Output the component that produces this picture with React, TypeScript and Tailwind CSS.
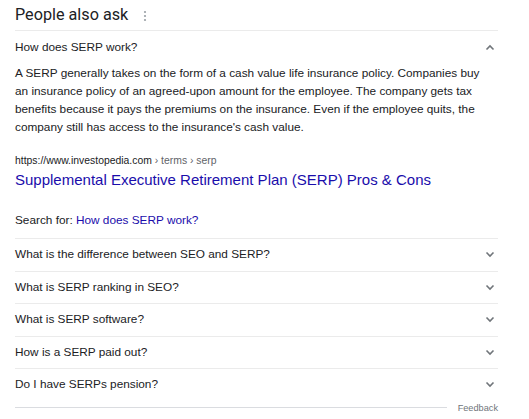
import React from 'react';

const Chevron: React.FC<{ up?: boolean }> = ({ up }) => (
  <svg width="10" height="7" viewBox="0 0 10 7" className="shrink-0">
    <polyline
      points={up ? '1.5,5.5 5,2 8.5,5.5' : '1.5,1.5 5,5 8.5,1.5'}
      fill="none"
      stroke="#70757a"
      strokeWidth="1.6"
    />
  </svg>
);

const questions = [
  'What is the difference between SEO and SERP?',
  'What is SERP ranking in SEO?',
  'What is SERP software?',
  'How is a SERP paid out?',
  'Do I have SERPs pension?',
];

export default function App() {
  return (
    <div className="min-h-screen bg-white text-[#202124] font-['Liberation_Sans',Arial,sans-serif]">
      <div className="pl-[15px] w-[498px]">
        {/* header */}
        <div className="h-[31px] flex items-center border-b border-[#ebebeb]">
          <span className="text-[16.2px] font-['Roboto',sans-serif] leading-none">People also ask</span>
          <svg width="4" height="12" viewBox="0 0 4 12" className="ml-[15px] mt-[1px]">
            <circle cx="2" cy="2" r="1.1" fill="#9aa0a6" />
            <circle cx="2" cy="6" r="1.1" fill="#9aa0a6" />
            <circle cx="2" cy="10" r="1.1" fill="#9aa0a6" />
          </svg>
        </div>

        {/* expanded question */}
        <div className="h-[32px] flex items-center justify-between pr-[3px]">
          <span className="text-[11.8px] pt-[2px]">How does SERP work?</span>
          <Chevron up />
        </div>
        <p className="text-[11.8px] leading-[18px] pt-[1px] pr-[10px]">
          A SERP generally takes on the form of a cash value life insurance policy. Companies buy an insurance policy of an agreed-upon amount for the employee. The company gets tax benefits because it pays the premiums on the insurance. Even if the employee quits, the company still has access to the insurance's cash value.
        </p>
        <div className="mt-[18px] text-[10.4px] leading-[14px] text-[#202124]">
          https://www.investopedia.com<span className="text-[#5f6368]"> › terms › serp</span>
        </div>
        <div className="text-[15px] leading-[24px] text-[#1a0dab]">
          Supplemental Executive Retirement Plan (SERP) Pros &amp; Cons
        </div>
        <div className="mt-[20px] text-[11.8px] leading-[16px] pb-[10px]">
          Search for: <span className="text-[#1a0dab]">How does SERP work?</span>
        </div>

        {/* collapsed questions */}
        {questions.map((q) => (
          <div key={q} className="h-[32.5px] flex items-center justify-between border-t border-[#ebebeb] pr-[3px]">
            <span className="text-[11.8px] pt-[1px]">{q}</span>
            <Chevron />
          </div>
        ))}

        <div className="flex items-center h-[4px] mt-[5px]">
          <div className="flex-1 border-t border-[#dadce0]" />
          <span className="ml-[11px] text-[9.2px] text-[#70757a] leading-none pt-[2px]">Feedback</span>
        </div>
      </div>
    </div>
  );
}
